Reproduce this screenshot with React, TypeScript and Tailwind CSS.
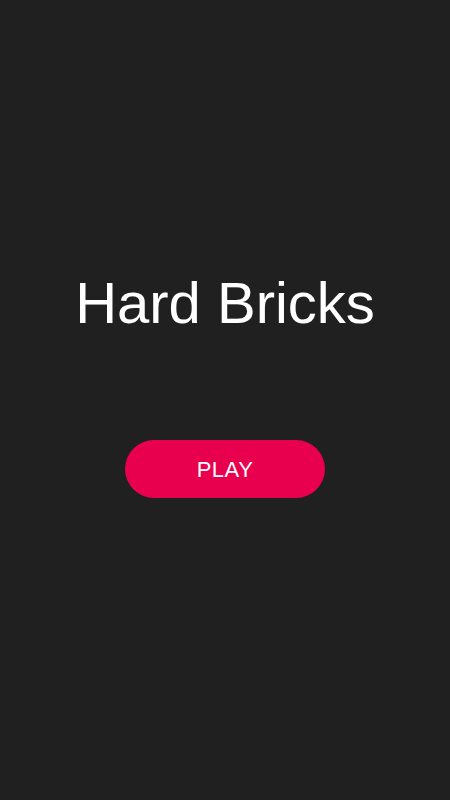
export default function App() {
  return (
    <div
      className="min-h-[800px] w-full bg-[#202020] flex flex-col items-center"
      style={{ fontFamily: '"Liberation Sans", Arial, sans-serif' }}
    >
      <h1 className="mt-[274px] text-[58px] leading-none text-white font-normal">
        Hard Bricks
      </h1>
      <button className="mt-[108px] w-[200px] h-[58px] rounded-full bg-[#e8004e] text-white text-[22px] tracking-[0.5px] flex items-center justify-center">
        PLAY
      </button>
    </div>
  );
}
